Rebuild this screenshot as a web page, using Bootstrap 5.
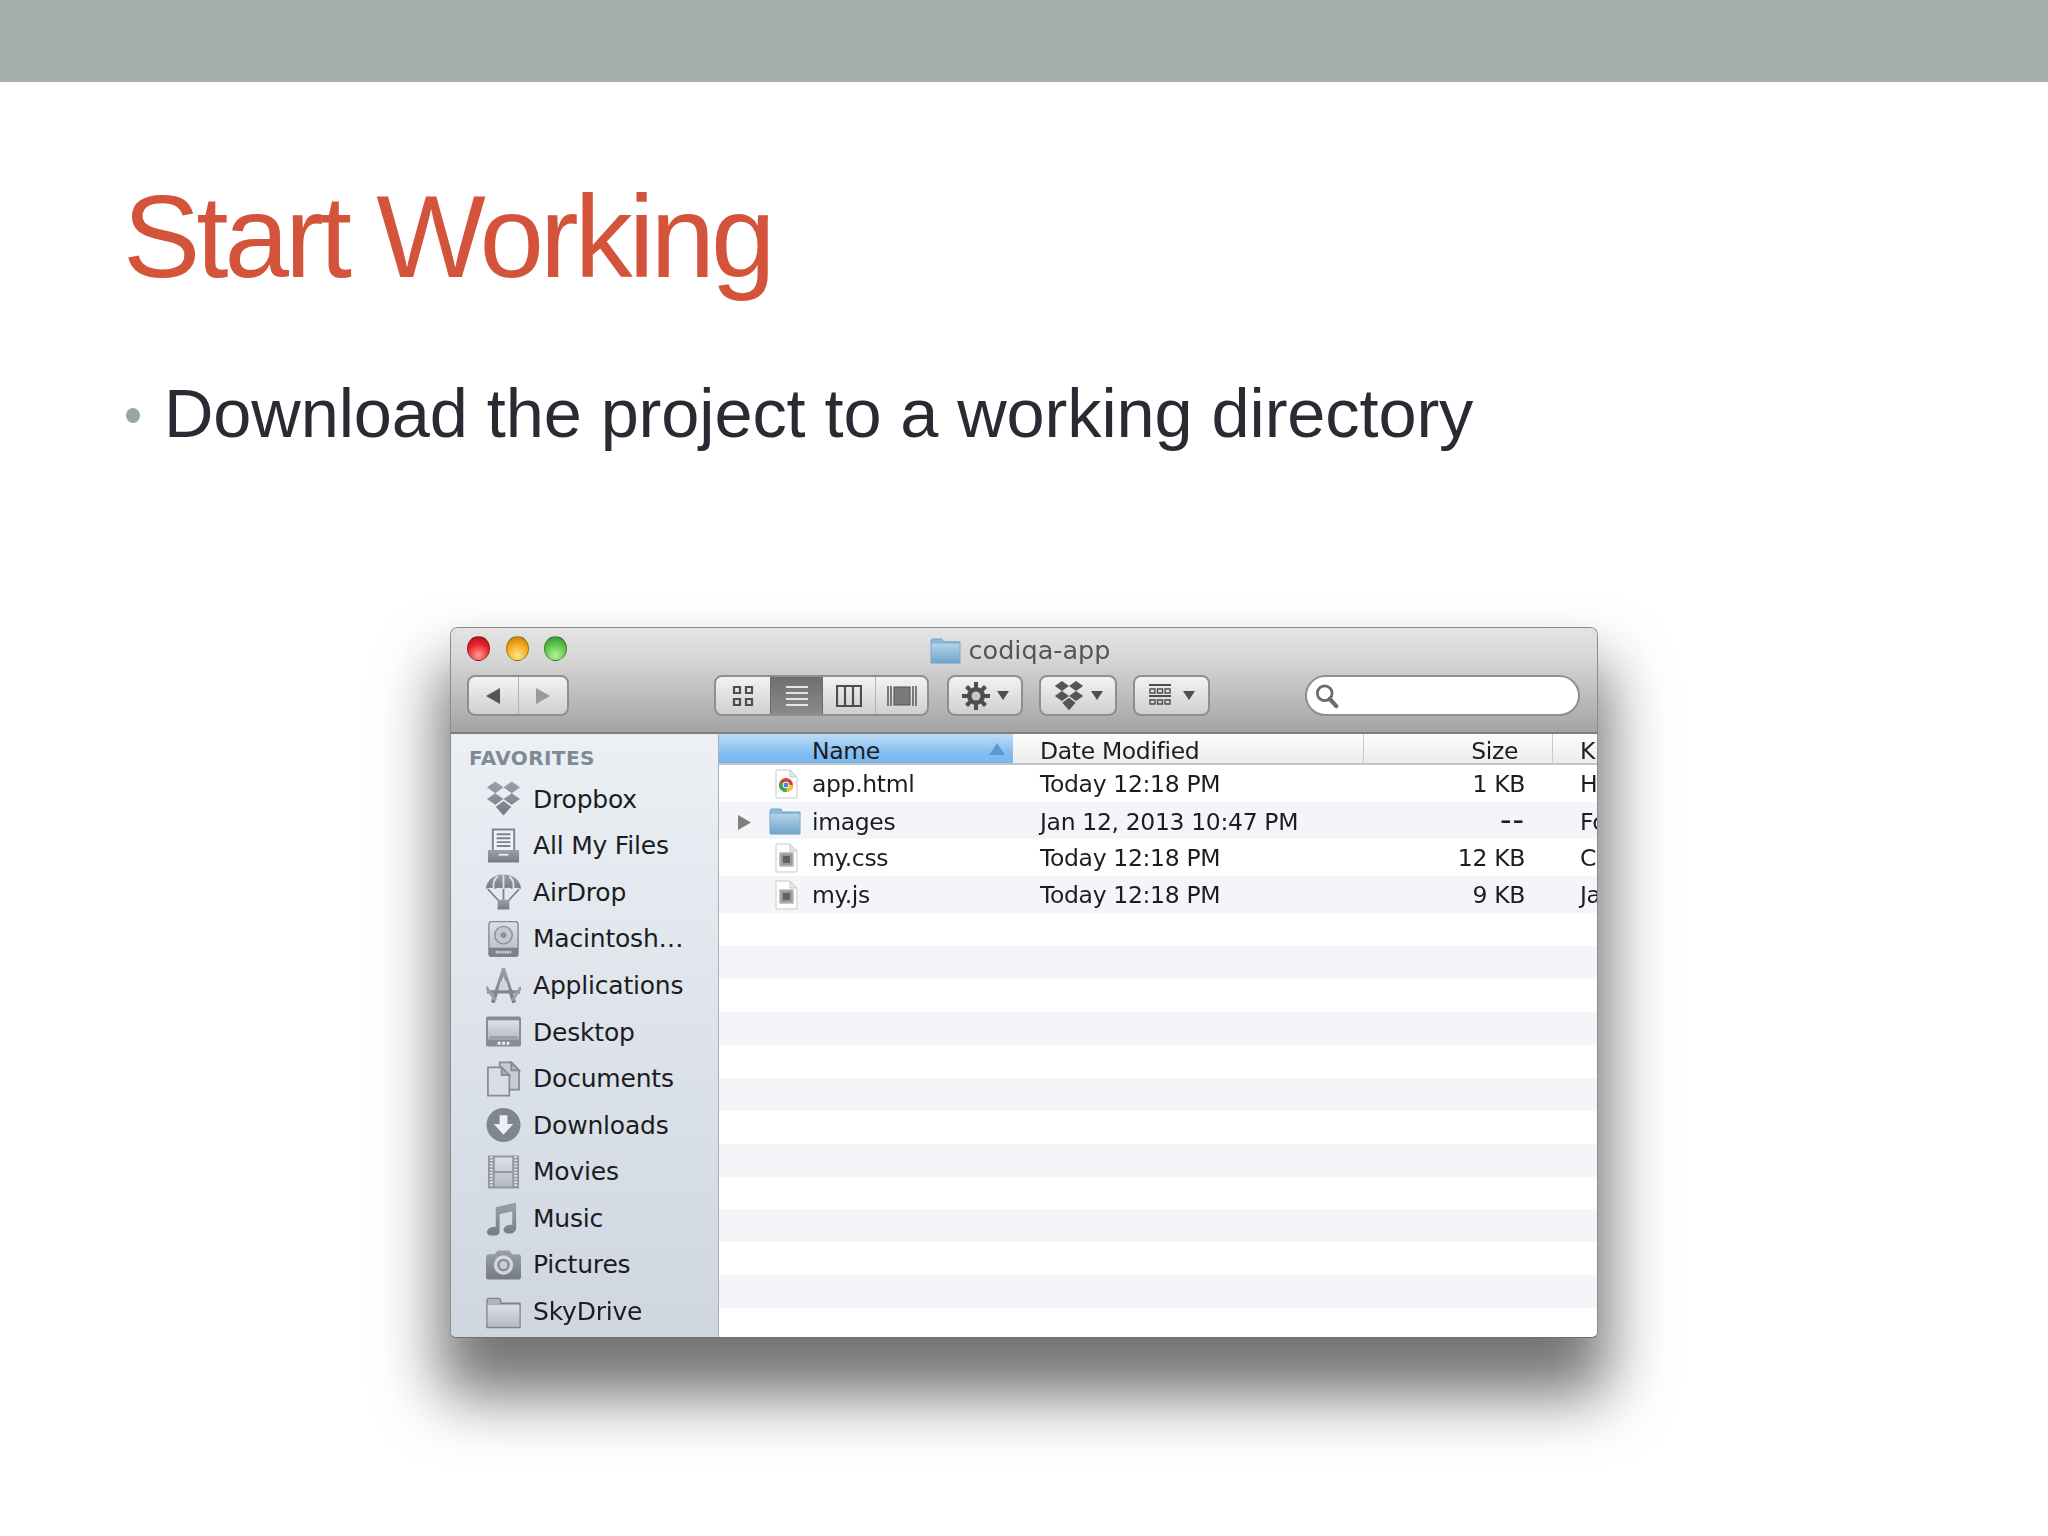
<!DOCTYPE html>
<html lang="en">
<head>
<meta charset="utf-8">
<title>Start Working</title>
<link href="https://cdn.jsdelivr.net/npm/bootstrap@5.3.0/dist/css/bootstrap.min.css" rel="stylesheet">
<style>
html,body{background:#fff;margin:0;height:1536px;overflow:hidden}
.slide-band{height:82px;background:#a5aea8}
.slide-title{font:400 116px/1 "Liberation Sans",Arial,sans-serif;color:#d4533b;letter-spacing:-4px;margin:0;padding:97px 0 0 123px;height:227px}
.slide-bullet{padding:71px 0 0 126px;height:318px;gap:24px;font:400 68.5px/1 "Liberation Sans",Arial,sans-serif;color:#2a2a33;letter-spacing:-.1px}
.bullet-dot{width:14px;height:15px;border-radius:50%;background:#9aa5a0;flex:none;margin-top:28px}
.fnd-win{width:1148px;height:711px;margin:0 0 0 450px;border-radius:8px 8px 6px 6px;box-shadow:0 48px 62px 10px rgba(0,0,0,.55);overflow:hidden;background:#fff;font-family:"DejaVu Sans","Liberation Sans",sans-serif;border:1px solid #8c8c8c;border-bottom-color:#6f6f6f;filter:blur(.45px)}
.fnd-head{height:106px;background:linear-gradient(#e4e4e4,#d6d6d6 30%,#a4a4a4);border-bottom:2px solid #7e7e7e;flex:none}
.fnd-titlebar{height:47px;padding:0 0 3px 16px}
.fnd-lights{gap:15.5px;width:0;flex:none;margin-top:-3px}
.fnd-light{width:23px;height:25px;border-radius:50%;flex:none;border:1px solid rgba(0,0,0,.3)}
.fnd-red{background:radial-gradient(circle at 50% 80%,#ff9a94,#e8212a 55%,#a51219)}
.fnd-yel{background:radial-gradient(circle at 50% 80%,#ffe58a,#f0a81a 55%,#b47a10)}
.fnd-grn{background:radial-gradient(circle at 50% 80%,#b8f29a,#5cc14a 55%,#2f8f2a)}
.fnd-name{flex:1;justify-content:center;gap:8px;font-size:25.5px;color:#555;padding-right:24px}
.fnd-tools{height:41px;padding-left:16px}
.fnd-seg{height:41px;border:2px solid #8f8f8f;border-radius:8px;background:linear-gradient(#f3f3f3,#cfcfcf);flex:none;align-items:center;justify-content:center;overflow:hidden}
.seg-nav{width:102px}
.seg-view{width:215px;margin-left:145px}
.seg-gear{width:76px;margin-left:18px;gap:7px}
.seg-drop{width:78px;margin-left:16px;gap:7px}
.seg-arr{width:77px;margin-left:16px;gap:12px}
.seg-cell{height:100%;display:flex;align-items:center;justify-content:center;flex:1}
.seg-first{flex:none;width:54px}
.seg-third{flex:none;width:52px}
.seg-line{border-left:1px solid #b2b2b2}
.seg-on{background:linear-gradient(#6f6f6f,#8a8a8a);flex:none;width:53px;border-left:1px solid #6a6a6a;border-right:1px solid #6a6a6a}
.fnd-caret{width:0;height:0;border-left:6px solid transparent;border-right:6px solid transparent;border-top:9px solid #4e4e4e}
.fnd-search{width:275px;height:41px;margin-left:95px;border-radius:21px;background:#fff;border:2px solid #8f8f8f;padding-left:8px;flex:none}
.fnd-body{flex:1;min-height:0}
.fnd-side{width:268px;background:linear-gradient(#ecf0f5,#cfd6e0);border-right:1px solid #a9afb8;padding:14px 0 0 18px;flex:none}
.side-head{font-size:20px;font-weight:700;color:#7f8a99;line-height:20px;margin-bottom:8px;letter-spacing:.4px}
.side-row{height:46.6px;gap:12px;font-size:25px;letter-spacing:-.2px;color:#1c1c22;padding-left:17px;white-space:nowrap}
.side-row svg{width:35px;height:36px;flex:none}
.fnd-main{flex:1;min-width:0;overflow:hidden}
.tbl-head,.tbl-row{display:grid;grid-template-columns:294px 350px 190px 1fr;align-items:center;font-size:23.5px;letter-spacing:-.35px;color:#1c1c22;white-space:nowrap;overflow:hidden}
.tbl-head{height:31px;background:linear-gradient(#fdfdfd,#ececec);border-bottom:2px solid #c4c4c4;padding-bottom:1px}
.tbl-row{height:37px;padding-top:2px}
.tbl-alt{background:#f3f5f9}
.col-name{position:relative;padding-left:93px;height:100%;display:flex;align-items:center}
.col-name svg{position:absolute;top:2px}
.tbl-head .col-name{background:linear-gradient(#bcdcf6,#7fbcf0 60%,#6fb1ec)}
.sort-arrow{position:absolute;right:8px;top:9px;width:0;height:0;border-left:8px solid transparent;border-right:8px solid transparent;border-bottom:12px solid #5f97d0}
.col-date{padding-left:27px}
.col-size{text-align:right;padding-right:28px}
.tbl-head .col-size{padding-right:34px;border-left:1px solid #c9c9c9;border-right:1px solid #c9c9c9}
.tbl-head .col-date{padding-left:27px}
.col-kind{padding-left:27px}
.size-dash{font-size:32px;line-height:1;letter-spacing:1px}
.tbl-fill{height:32.95px}
</style>
</head>
<body>
<svg width="0" height="0" class="position-absolute">
<defs>
<linearGradient id="g1" x1="0" y1="0" x2="0" y2="1"><stop offset="0" stop-color="#9aa1ac"/><stop offset="1" stop-color="#747b87"/></linearGradient>
<linearGradient id="g2" x1="0" y1="0" x2="0" y2="1"><stop offset="0" stop-color="#dde1e7"/><stop offset="1" stop-color="#b4bac4"/></linearGradient>
<linearGradient id="gf" x1="0" y1="0" x2="0" y2="1"><stop offset="0" stop-color="#b4d4ea"/><stop offset="1" stop-color="#6ea3c9"/></linearGradient>
<symbol id="i-drop" viewBox="0 0 36 36"><path fill="url(#g1)" d="M9.500 0l8.500 6-8.500 6L1 6zM26.500 0L35 6l-8.500 6L18 6zM9.500 12l8.500 6-8.500 6L1 18zM26.500 12l8.500 6-8.500 6L18 18zM18 20l8 6-8 9-8-9z"/></symbol>
<symbol id="i-files" viewBox="0 0 36 36"><path fill="#eef0f3" stroke="#7d8490" stroke-width="2" d="M7 1h22v22H7z"/><path stroke="#7d8490" stroke-width="2" d="M11 6h14M11 10h14M11 14h14M11 18h14"/><path fill="url(#g1)" d="M2 22h32v13H2z"/><path fill="#e4e7ec" d="M13 26h10v2H13z"/></symbol>
<symbol id="i-air" viewBox="0 0 36 36"><path fill="url(#g1)" d="M18 0C7 0 0 7 0 15c3-2 6-2 9 0 3-2 6-2 9 0 3-2 6-2 9 0 3-2 6-2 9 0 0-8-7-15-18-15z"/><path stroke="#dfe2e8" stroke-width="1.800" fill="none" d="M18 0v15M12 2C8 5 7 10 8 15M24 2c4 3 5 8 4 13"/><path stroke="#7d8490" stroke-width="1.800" fill="none" d="M2 15l11 12M34 15L23 27M18 15v12"/><path fill="url(#g1)" d="M12 26h12v10H12z"/></symbol>
<symbol id="i-hd" viewBox="0 0 36 36"><rect x="3" y="0" width="30" height="36" rx="3" fill="url(#g2)" stroke="#858c98" stroke-width="1.500"/><circle cx="18" cy="14" r="9" fill="#c3c8d0" stroke="#8a919d" stroke-width="1.500"/><circle cx="18" cy="14" r="3" fill="#8a919d"/><path fill="#7a818d" d="M3 27h30v7a2 2 0 0 1-2 2H5a2 2 0 0 1-2-2z"/><path stroke="#d9dde3" stroke-width="3" stroke-dasharray="2 1" d="M10 31.500h16"/></symbol>
<symbol id="i-apps" viewBox="0 0 36 36"><path stroke="url(#g1)" stroke-width="4" fill="none" d="M18.500 0L7 35M17.500 0L29 35"/><path stroke="#808794" stroke-width="3.400" d="M1 24h34"/><path stroke="#98a0ab" stroke-width="3" d="M0 19l10 14M36 19L27 33"/><path fill="#d2d6dc" d="M15 13h6l2.500 9h-11z"/></symbol>
<symbol id="i-desk" viewBox="0 0 36 36"><rect x="0" y="2" width="36" height="31" rx="2" fill="#858c98"/><rect x="2" y="6" width="32" height="20" fill="url(#g2)"/><path d="M2 26h32l-2-4H4z" fill="#9aa1ac"/><path stroke="#eef0f3" stroke-width="3" stroke-dasharray="3 1.600" d="M12 29.500h12"/></symbol>
<symbol id="i-docs" viewBox="0 0 36 36"><path fill="#c8cdd5" stroke="#858c98" stroke-width="1.800" d="M14 1h12l8 8v20H14z"/><path fill="#dadde3" stroke="#858c98" stroke-width="1.800" d="M2 6h14l8 8v21H2z"/><path fill="#aeb4be" stroke="#858c98" stroke-width="1.800" d="M16 6v8h8zM26 1v8h8z"/></symbol>
<symbol id="i-dl" viewBox="0 0 36 36"><circle cx="18" cy="18" r="17.500" fill="#7f8692"/><path fill="#eef0f3" d="M14 8h8v9h6L18 28 8 17h6z"/></symbol>
<symbol id="i-mov" viewBox="0 0 36 36"><path fill="#9097a3" d="M2 1h32v34H2z"/><path fill="url(#g2)" d="M9 3h18v14H9zM9 19h18v14H9z"/><path stroke="#e6e9ee" stroke-width="3" stroke-dasharray="1.600 1.600" d="M5.500 2v32M30.500 2v32"/></symbol>
<symbol id="i-mus" viewBox="0 0 36 36"><path fill="url(#g1)" d="M31 1v26c0 4-3 6-7 6s-6-2-6-4 3-5 7-5c1 0 2 0 2 .5V10l-13 3v18c0 3-3 4-7 4s-6-1-6-3.500 3-5.500 7-5.500c1 0 2 .2 2 .5V6z"/></symbol>
<symbol id="i-pic" viewBox="0 0 36 36"><path fill="url(#g1)" d="M3 7h6l3-4h12l3 4h6a3 3 0 0 1 3 3v20a3 3 0 0 1-3 3H3a3 3 0 0 1-3-3V10a3 3 0 0 1 3-3z"/><circle cx="18" cy="18" r="10" fill="#d4d8de"/><circle cx="18" cy="18" r="6.500" fill="#868d99"/><circle cx="18" cy="18" r="4" fill="#c9cdd4"/></symbol>
<symbol id="i-sky" viewBox="0 0 36 36"><path fill="#aeb4be" stroke="#7b828e" stroke-width="1.400" d="M1 6a2 2 0 0 1 2-2h10a2 2 0 0 1 2 2v3h20v25H1z"/><path fill="url(#g2)" d="M1.700 11h32.600v22H1.700z"/></symbol>
<symbol id="i-folder" viewBox="0 0 32 28"><path fill="#8db9d8" stroke="#6f9fc2" d="M1 4a2 2 0 0 1 2-2h8a2 2 0 0 1 2 2v1h18v22H1z"/><path fill="url(#gf)" d="M1.500 7h29v20h-29z"/></symbol>
<symbol id="i-doc" viewBox="0 0 24 30"><path fill="#fff" stroke="#c9c9c9" d="M2 1h14l7 7v21H2z"/><path fill="#e6e6e6" stroke="#c9c9c9" d="M16 1v7h7z"/><rect x="6" y="10" width="13" height="13" fill="#9a9a9a" stroke="#b5b5b5" stroke-width="1.500"/><rect x="9" y="13" width="7" height="7" fill="#626262"/></symbol>
</defs>
</svg>
<div class="slide-band"></div>
<h1 class="slide-title">Start Working</h1>
<div class="slide-bullet d-flex align-items-start"><span class="bullet-dot"></span><span>Download the project to a working directory</span></div>
<div class="fnd-win d-flex flex-column">
  <div class="fnd-head">
    <div class="fnd-titlebar d-flex align-items-center">
      <div class="fnd-lights d-flex"><span class="fnd-light fnd-red"></span><span class="fnd-light fnd-yel"></span><span class="fnd-light fnd-grn"></span></div>
      <div class="fnd-name d-flex align-items-center"><svg width="31" height="27"><use href="#i-folder"/></svg><span>codiqa-app</span></div>
    </div>
    <div class="fnd-tools d-flex">
      <div class="fnd-seg seg-nav d-flex">
        <div class="seg-cell"><svg width="16" height="18" viewBox="0 0 16 18"><path fill="#555" d="M15 1v16L1 9z"/></svg></div>
        <div class="seg-cell seg-line"><svg width="16" height="18" viewBox="0 0 16 18"><path fill="#9a9a9a" d="M1 1v16l14-8z"/></svg></div>
      </div>
      <div class="fnd-seg seg-view d-flex">
        <div class="seg-cell seg-first"><svg width="22" height="22" viewBox="0 0 22 22"><path fill="none" stroke="#4e4e4e" stroke-width="2.200" d="M2 2h6v6H2zM14 2h6v6h-6zM2 14h6v6H2zM14 14h6v6h-6z"/></svg></div>
        <div class="seg-cell seg-on"><svg width="24" height="22" viewBox="0 0 24 22"><path stroke="#e4e4e4" stroke-width="2" d="M1 2h22M1 8h22M1 14h22M1 20h22"/></svg></div>
        <div class="seg-cell seg-third"><svg width="26" height="22" viewBox="0 0 26 22"><path fill="none" stroke="#4e4e4e" stroke-width="2.200" d="M1 1h24v20H1zM9 1v20M17 1v20"/></svg></div>
        <div class="seg-cell seg-line"><svg width="30" height="22" viewBox="0 0 30 22"><path stroke="#5e5e5e" stroke-width="1.600" d="M1 1v20M4 1v20M26 1v20M29 1v20"/><rect x="7" y="2" width="16" height="18" fill="#7a7a7a" stroke="#4e4e4e"/></svg></div>
      </div>
      <div class="fnd-seg seg-gear d-flex">
        <svg width="28" height="28" viewBox="0 0 28 28"><g fill="#4e4e4e"><circle cx="14" cy="14" r="9"/><path d="M12 0h4v6h-4zM12 22h4v6h-4zM0 12h6v4H0zM22 12h6v4h-6zM3 6l3-3 4 4-3 3zM18 21l3-3 4 4-3 3zM22 3l3 3-4 4-3-3zM7 18l3 3-4 4-3-3z"/></g><circle cx="14" cy="14" r="4.500" fill="#c9c9c9"/></svg>
        <span class="fnd-caret"></span>
      </div>
      <div class="fnd-seg seg-drop d-flex">
        <svg width="30" height="30" viewBox="0 0 36 36"><path fill="#555" d="M9.500 0l8.500 6-8.500 6L1 6zM26.500 0L35 6l-8.500 6L18 6zM9.500 12l8.500 6-8.500 6L1 18zM26.500 12l8.500 6-8.500 6L18 18zM18 20l8 6-8 9-8-9z"/></svg>
        <span class="fnd-caret"></span>
      </div>
      <div class="fnd-seg seg-arr d-flex">
        <svg width="22" height="26" viewBox="0 0 22 26"><path stroke="#4e4e4e" stroke-width="2" d="M0 2h22M0 13h22"/><path fill="none" stroke="#4e4e4e" stroke-width="1.400" d="M1 6h5v4H1zM8.500 6h5v4h-5zM16 6h5v4h-5zM1 17h5v4H1zM8.500 17h5v4h-5zM16 17h5v4h-5z"/></svg>
        <span class="fnd-caret"></span>
      </div>
      <div class="fnd-search d-flex align-items-center"><svg width="24" height="26" viewBox="0 0 26 28"><circle cx="10.500" cy="11" r="8" fill="none" stroke="#6b6b6b" stroke-width="3"/><path stroke="#6b6b6b" stroke-width="4.500" stroke-linecap="round" d="M16 17l7 8"/></svg></div>
    </div>
  </div>
  <div class="fnd-body d-flex">
    <aside class="fnd-side">
      <div class="side-head">FAVORITES</div>
      <div class="side-row d-flex align-items-center"><svg><use href="#i-drop"/></svg>Dropbox</div>
      <div class="side-row d-flex align-items-center"><svg><use href="#i-files"/></svg>All My Files</div>
      <div class="side-row d-flex align-items-center"><svg><use href="#i-air"/></svg>AirDrop</div>
      <div class="side-row d-flex align-items-center"><svg><use href="#i-hd"/></svg>Macintosh…</div>
      <div class="side-row d-flex align-items-center"><svg><use href="#i-apps"/></svg>Applications</div>
      <div class="side-row d-flex align-items-center"><svg><use href="#i-desk"/></svg>Desktop</div>
      <div class="side-row d-flex align-items-center"><svg><use href="#i-docs"/></svg>Documents</div>
      <div class="side-row d-flex align-items-center"><svg><use href="#i-dl"/></svg>Downloads</div>
      <div class="side-row d-flex align-items-center"><svg><use href="#i-mov"/></svg>Movies</div>
      <div class="side-row d-flex align-items-center"><svg><use href="#i-mus"/></svg>Music</div>
      <div class="side-row d-flex align-items-center"><svg><use href="#i-pic"/></svg>Pictures</div>
      <div class="side-row d-flex align-items-center"><svg><use href="#i-sky"/></svg>SkyDrive</div>
    </aside>
    <main class="fnd-main">
      <div class="tbl-head"><div class="col-name">Name<span class="sort-arrow"></span></div><div class="col-date">Date Modified</div><div class="col-size">Size</div><div class="col-kind">Kind</div></div>
      <div class="tbl-row"><div class="col-name"><svg style="left:55px" width="24" height="30" viewBox="0 0 24 30"><path fill="#fff" stroke="#c9c9c9" d="M2 1h14l7 7v21H2z"/><path fill="#e6e6e6" stroke="#c9c9c9" d="M16 1v7h7z"/><circle cx="12" cy="16" r="7" fill="#d8432f"/><path fill="#3aa655" d="M5 16a7 7 0 0 0 7 7l3-5-6-1-2-5a7 7 0 0 0-2 4z"/><path fill="#f2c230" d="M12 23a7 7 0 0 0 7-7h-5z"/><circle cx="12" cy="16" r="3" fill="#4a86e0" stroke="#fff"/></svg>app.html</div><div class="col-date">Today 12:18 PM</div><div class="col-size">1 KB</div><div class="col-kind">HTML document</div></div>
      <div class="tbl-row tbl-alt"><div class="col-name"><svg style="left:18px;top:10px" width="15" height="17" viewBox="0 0 15 17"><path fill="#7f7f7f" d="M1 1v15l13-7.500z"/></svg><svg style="left:50px;top:3px" width="32" height="28"><use href="#i-folder"/></svg>images</div><div class="col-date">Jan 12, 2013 10:47 PM</div><div class="col-size"><span class="size-dash">--</span></div><div class="col-kind">Folder</div></div>
      <div class="tbl-row"><div class="col-name"><svg style="left:55px" width="24" height="30"><use href="#i-doc"/></svg>my.css</div><div class="col-date">Today 12:18 PM</div><div class="col-size">12 KB</div><div class="col-kind">CSS</div></div>
      <div class="tbl-row tbl-alt"><div class="col-name"><svg style="left:55px" width="24" height="30"><use href="#i-doc"/></svg>my.js</div><div class="col-date">Today 12:18 PM</div><div class="col-size">9 KB</div><div class="col-kind">JavaScript</div></div>
      <div class="tbl-fill"></div><div class="tbl-fill tbl-alt"></div><div class="tbl-fill"></div><div class="tbl-fill tbl-alt"></div><div class="tbl-fill"></div><div class="tbl-fill tbl-alt"></div><div class="tbl-fill"></div><div class="tbl-fill tbl-alt"></div><div class="tbl-fill"></div><div class="tbl-fill tbl-alt"></div><div class="tbl-fill"></div><div class="tbl-fill tbl-alt"></div><div class="tbl-fill"></div>
    </main>
  </div>
</div>
<script src="https://cdn.jsdelivr.net/npm/bootstrap@5.3.0/dist/js/bootstrap.bundle.min.js"></script>
</body>
</html>
